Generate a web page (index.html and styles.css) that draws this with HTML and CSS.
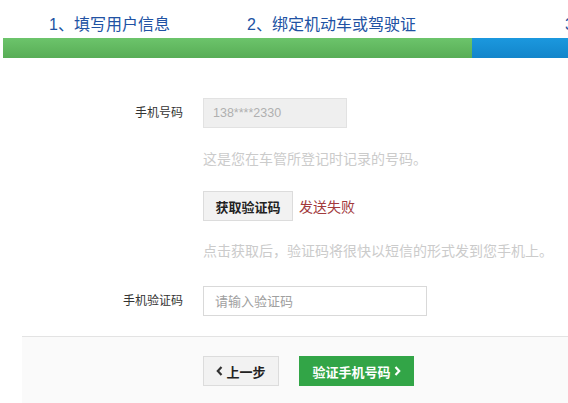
FILE: index.html
```html
<!DOCTYPE html>
<html lang="zh-CN">
<head>
<meta charset="utf-8">
<title>绑定手机</title>
<link rel="stylesheet" href="styles.css">
</head>
<body>
<div class="steps">
  <div class="step step-1">1、填写用户信息</div>
  <div class="step step-2">2、绑定机动车或驾驶证</div>
  <div class="step step-3">3、验证手机</div>
</div>
<div class="bar">
  <div class="bar-done"></div>
  <div class="bar-current"></div>
</div>
<div class="form">
  <div class="row">
    <div class="label">手机号码</div>
    <div class="field field-disabled">138****2330</div>
  </div>
  <div class="hint hint-1">这是您在车管所登记时记录的号码。</div>
  <div class="row row-send">
    <button class="btn-code" type="button">获取验证码</button>
    <span class="send-fail">发送失败</span>
  </div>
  <div class="hint hint-2">点击获取后，验证码将很快以短信的形式发到您手机上。</div>
  <div class="row row-code">
    <div class="label">手机验证码</div>
    <input class="field field-input" type="text" placeholder="请输入验证码">
  </div>
</div>
<div class="footer">
  <button class="btn btn-back" type="button"><svg class="chev" width="7" height="10" viewBox="0 0 7 10"><path d="M5.5 1 L1.8 5 L5.5 9" fill="none" stroke="#333" stroke-width="2.2"/></svg>上一步</button>
  <button class="btn btn-next" type="button">验证手机号码<svg class="chev chev-r" width="7" height="10" viewBox="0 0 7 10"><path d="M1.5 1 L5.2 5 L1.5 9" fill="none" stroke="#fff" stroke-width="2.2"/></svg></button>
</div>
</body>
</html>
```

FILE: styles.css
```css
html, body {
  margin: 0;
  padding: 0;
  background: #fff;
  overflow: hidden;
}
body {
  font-family: "Liberation Sans", "Noto Sans CJK SC", sans-serif;
  color: #333;
  width: 568px;
  height: 403px;
}
.steps {
  display: flex;
  padding-top: 16px;
  height: 22px;
  line-height: 18px;
  font-size: 16px;
  color: #2152a3;
  white-space: nowrap;
  overflow: hidden;
}
.step-1 {
  margin-left: 49px;
  width: 198px;
  flex: none;
}
.step-2 {
  width: 318px;
  flex: none;
}
.step-3 {
  flex: none;
}
.bar {
  display: flex;
  margin-left: 3px;
  height: 20px;
}
.bar-done {
  width: 469px;
  flex: none;
  background: linear-gradient(#6cc46b, #58ad56);
}
.bar-current {
  flex: 1;
  background: linear-gradient(#1b98de, #1385ca);
}
.form {
  padding-top: 40px;
}
.row {
  display: flex;
  align-items: center;
  height: 30px;
}
.label {
  width: 183px;
  margin-right: 20px;
  text-align: right;
  font-size: 12px;
  line-height: 30px;
  color: #333;
  flex: none;
}
.field {
  box-sizing: border-box;
  height: 30px;
  border: 1px solid #e2e2e2;
  font-family: "Liberation Sans", "Noto Sans CJK SC", sans-serif;
}
.field-disabled {
  width: 144px;
  background: #efefef;
  color: #b0b0b0;
  font-size: 12.5px;
  line-height: 28px;
  padding-left: 9px;
}
.field-input {
  width: 224px;
  border-color: #d9d9d9;
  font-size: 13px;
  padding: 0 0 0 11px;
  margin: 0;
  outline: none;
  color: #333;
}
.field-input::placeholder {
  color: #a0a0a0;
}
.hint {
  margin-left: 203px;
  font-size: 14px;
  line-height: 20px;
  color: #cbcbcb;
  white-space: nowrap;
}
.hint-1 {
  margin-top: 21px;
}
.row-send {
  margin-top: 22px;
  padding-left: 203px;
}
.btn-code {
  box-sizing: border-box;
  width: 90px;
  height: 30px;
  margin: 0;
  padding: 0;
  background: #f2f2f2;
  border: 1px solid #dcdcdc;
  font-family: "Liberation Sans", "Noto Sans CJK SC", sans-serif;
  font-size: 13px;
  font-weight: bold;
  color: #222;
}
.send-fail {
  margin-left: 6px;
  font-size: 14px;
  color: #a23a3d;
}
.hint-2 {
  margin-top: 20px;
}
.row-code {
  margin-top: 25px;
}
.footer {
  margin-top: 20px;
  margin-left: 22px;
  border-top: 1px solid #e3e3e3;
  background: #fafafa;
  padding: 19px 0 17px 181px;
  display: flex;
  gap: 20px;
  height: 30px;
}
.btn {
  box-sizing: border-box;
  height: 30px;
  margin: 0;
  padding: 0;
  display: flex;
  align-items: center;
  justify-content: center;
  font-family: "Liberation Sans", "Noto Sans CJK SC", sans-serif;
  font-size: 13px;
  font-weight: bold;
}
.btn-back {
  width: 76px;
  background: #f2f2f2;
  border: 1px solid #dcdcdc;
  color: #222;
}
.btn-next {
  width: 115px;
  background: #32a547;
  border: 1px solid #32a547;
  color: #fff;
}
.chev {
  margin-right: 3px;
}
.chev-r {
  margin-right: 0;
  margin-left: 3px;
}
```
